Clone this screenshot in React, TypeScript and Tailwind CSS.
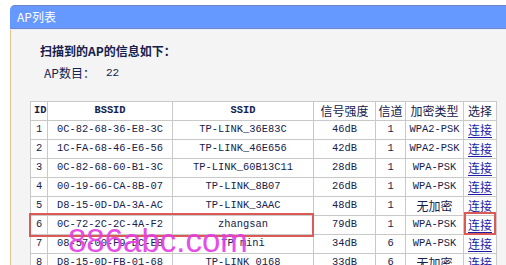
import React from 'react';

interface ApRow {
  id: number;
  bssid: string;
  ssid: string;
  signal: string;
  channel: string;
  security: string;
}

const rows: ApRow[] = [
  { id: 1, bssid: '0C-82-68-36-E8-3C', ssid: 'TP-LINK_36E83C', signal: '46dB', channel: '1', security: 'WPA2-PSK' },
  { id: 2, bssid: '1C-FA-68-46-E6-56', ssid: 'TP-LINK_46E656', signal: '42dB', channel: '1', security: 'WPA2-PSK' },
  { id: 3, bssid: '0C-82-68-60-B1-3C', ssid: 'TP-LINK_60B13C11', signal: '28dB', channel: '1', security: 'WPA-PSK' },
  { id: 4, bssid: '00-19-66-CA-8B-07', ssid: 'TP-LINK_8B07', signal: '26dB', channel: '1', security: 'WPA-PSK' },
  { id: 5, bssid: 'D8-15-0D-DA-3A-AC', ssid: 'TP-LINK_3AAC', signal: '48dB', channel: '1', security: '无加密' },
  { id: 6, bssid: '0C-72-2C-2C-4A-F2', ssid: 'zhangsan', signal: '79dB', channel: '1', security: 'WPA-PSK' },
  { id: 7, bssid: '08-57-00-F9-DC-E8', ssid: 'TP mini', signal: '34dB', channel: '6', security: 'WPA-PSK' },
  { id: 8, bssid: 'D8-15-0D-FB-01-68', ssid: 'TP-LINK_0168', signal: '33dB', channel: '6', security: '无加密' },
];

const mono = "font-['Liberation_Mono','Noto_Sans_CJK_SC',monospace] text-[10.4px]";
const cjk = "font-['Noto_Sans_CJK_SC',sans-serif] text-[12px]";
const cell = 'border border-[#c9c9c9] p-0 text-center align-middle';

export default function App() {
  return (
    <div className="relative w-[506px] h-[265px] overflow-hidden bg-white text-[#15214c]">
      <div className="pt-[5px] pl-[10px]">
        {/* 标题栏 */}
        <div className="h-[24px] rounded-tl-[5px] border-y border-[#6f86c8] bg-[#6699ff] pl-[7px] flex items-center text-white text-[12px] font-['Noto_Sans_CJK_SC',sans-serif] leading-none">
          AP列表
        </div>
        <div className="h-px bg-[#e6eeff]" />

        <div className="h-[260px] border-l border-[#e6c38e] bg-[#f4f4f4] pl-[19px] pt-[13px]">
          <div className={`${cjk} ml-[10px] leading-[16px] font-bold`}>扫描到的AP的信息如下：</div>
          <div className={`${cjk} ml-[14px] mt-[6px] leading-[16px] flex`}>
            <span>AP数目：</span>
            <span className="ml-[11px] font-['Liberation_Mono',monospace] text-[11px]">22</span>
          </div>

          <table className="mt-[20px] w-[466px] table-fixed border-collapse bg-white">
            <colgroup>
              <col className="w-[17px]" />
              <col className="w-[125px]" />
              <col className="w-[141px]" />
              <col className="w-[62px]" />
              <col className="w-[30px]" />
              <col className="w-[58px]" />
              <col className="w-[33px]" />
            </colgroup>
            <thead>
              <tr className="h-[18px]">
                <th className={`${cell} ${mono} font-bold text-left pl-[3px]`}>ID</th>
                <th className={`${cell} ${mono} font-bold`}>BSSID</th>
                <th className={`${cell} ${mono} font-bold`}>SSID</th>
                <th className={`${cell} ${cjk} font-normal`}>信号强度</th>
                <th className={`${cell} ${cjk} font-normal`}>信道</th>
                <th className={`${cell} ${cjk} font-normal`}>加密类型</th>
                <th className={`${cell} ${cjk} font-normal`}>选择</th>
              </tr>
            </thead>
            <tbody>
              {rows.map(r => (
                <tr key={r.id} className="h-[19px]">
                  <td className={`${cell} ${mono} text-left pl-[5px]`}>{r.id}</td>
                  <td className={`${cell} ${mono}`}>{r.bssid}</td>
                  <td className={`${cell} ${mono}`}>{r.ssid}</td>
                  <td className={`${cell} ${mono}`}>{r.signal}</td>
                  <td className={`${cell} ${mono}`}>{r.channel}</td>
                  <td className={`${cell} ${r.security === '无加密' ? cjk : mono}`}>{r.security}</td>
                  <td className={`${cell} ${cjk}`}>
                    <span className="text-[#1c1ca8] underline underline-offset-2">连接</span>
                  </td>
                </tr>
              ))}
            </tbody>
          </table>
        </div>
      </div>

      {/* 选中行的红框 */}
      <div className="absolute left-[29px] top-[213px] w-[285px] h-[24px] border-2 border-[#dc5a55]" />
      <div className="absolute left-[464px] top-[212px] w-[32px] h-[23px] border-2 border-[#dc5a55]" />

      {/* 水印 */}
      <div className="absolute left-[68px] top-[224px] text-[33px] leading-none font-['Liberation_Sans',sans-serif] text-[#e33de3] opacity-90 pointer-events-none">
        886abc.com
      </div>
    </div>
  );
}
